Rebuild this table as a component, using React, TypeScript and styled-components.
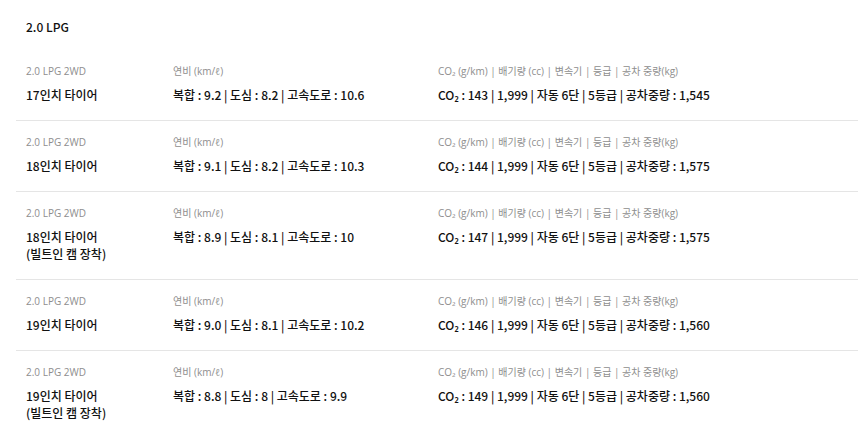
import React from 'react'
import styled, { createGlobalStyle } from 'styled-components'

const GlobalStyle = createGlobalStyle`
  body {
    margin: 0;
    background: #fff;
    font-family: 'Noto Sans CJK KR', 'Noto Sans', sans-serif;
    color: #111;
  }
`

type Spec = {
  trim: string
  tire: string[]
  fuel: string
  co2: string
  weight: string
}

const specs: Spec[] = [
  { trim: '2.0 LPG 2WD', tire: ['17인치 타이어'], fuel: '복합 : 9.2 | 도심 : 8.2 | 고속도로 : 10.6', co2: '143', weight: '1,545' },
  { trim: '2.0 LPG 2WD', tire: ['18인치 타이어'], fuel: '복합 : 9.1 | 도심 : 8.2 | 고속도로 : 10.3', co2: '144', weight: '1,575' },
  { trim: '2.0 LPG 2WD', tire: ['18인치 타이어', '(빌트인 캠 장착)'], fuel: '복합 : 8.9 | 도심 : 8.1 | 고속도로 : 10', co2: '147', weight: '1,575' },
  { trim: '2.0 LPG 2WD', tire: ['19인치 타이어'], fuel: '복합 : 9.0 | 도심 : 8.1 | 고속도로 : 10.2', co2: '146', weight: '1,560' },
  { trim: '2.0 LPG 2WD', tire: ['19인치 타이어', '(빌트인 캠 장착)'], fuel: '복합 : 8.8 | 도심 : 8 | 고속도로 : 9.9', co2: '149', weight: '1,560' },
]

const App = () => {
  return (
    <>
      <GlobalStyle />
      <Section>
        <Heading>2.0 LPG</Heading>
        <Table>
          {specs.map((s, i) => (
            <Row key={i}>
              <Cell>
                <Label>{s.trim}</Label>
                <Value>
                  {s.tire.map((t, j) => (
                    <div key={j}>{t}</div>
                  ))}
                </Value>
              </Cell>
              <Cell>
                <Label>연비 (km/ℓ)</Label>
                <Value>{s.fuel}</Value>
              </Cell>
              <Cell>
                <Label>CO₂ (g/km) | 배기량 (cc) | 변속기 | 등급 | 공차 중량(kg)</Label>
                <Value>
                  CO₂ : {s.co2} | 1,999 | 자동 6단 | 5등급 | 공차중량 : {s.weight}
                </Value>
              </Cell>
            </Row>
          ))}
        </Table>
      </Section>
    </>
  )
}

export default App

const Section = styled.div`
  padding: 18px 0 0 16px;
`

const Heading = styled.h3`
  margin: 0 0 15px 10px;
  font-size: 12px;
  line-height: 17px;
  font-weight: 500;
`

const Table = styled.div`
  display: flex;
  flex-direction: column;
`

const Row = styled.div`
  display: grid;
  grid-template-columns: 147px 265px 1fr;
  padding: 14px 0 17px 10px;
  & + & {
    border-top: 1px solid #e5e5e5;
  }
`

const Cell = styled.div`
  display: flex;
  flex-direction: column;
  gap: 8px;
`

const Label = styled.div`
  font-family: 'Open Sans', 'Noto Sans CJK KR', sans-serif;
  font-size: 10px;
  line-height: 14px;
  color: #8e8e8e;
  white-space: nowrap;
`

const Value = styled.div`
  font-size: 12px;
  line-height: 17px;
  font-weight: 500;
  color: #111;
  white-space: nowrap;
`
